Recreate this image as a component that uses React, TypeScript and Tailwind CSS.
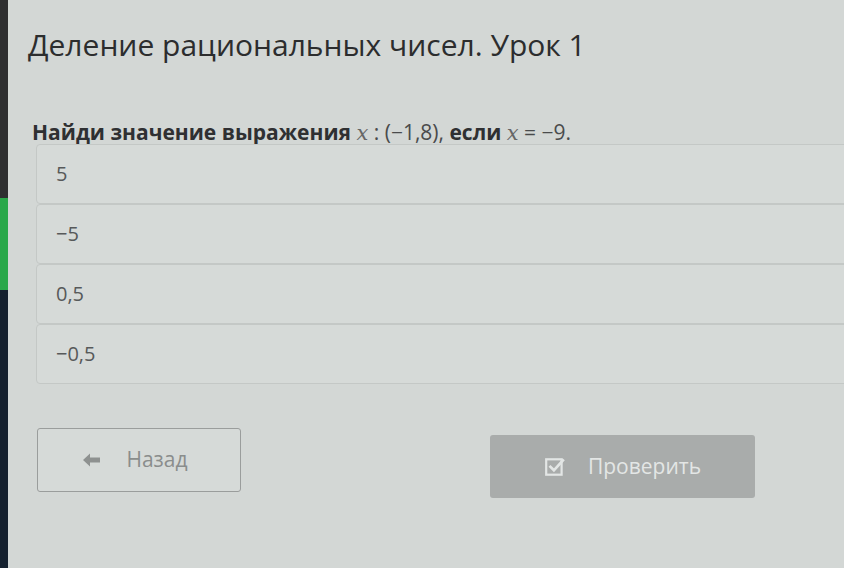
import React from "react";

const options = ["5", "\u22125", "0,5", "\u22120,5"];

export default function App() {
  return (
    <div className="flex h-[568px] w-[844px] overflow-hidden bg-[#d3d7d5]" style={{ fontFamily: '"Open Sans", "Noto Sans", sans-serif' }}>
      <div className="flex w-[8px] shrink-0 flex-col">
        <div className="h-[198px] bg-[#2e2f30]" />
        <div className="h-[92px] bg-[#2aa84a]" />
        <div className="flex-1 bg-[#14202e]" />
      </div>
      <div className="flex min-w-0 flex-1 flex-col pl-[20px]">
        <h1 className="mt-[24px] whitespace-nowrap text-[30px] leading-[42px] tracking-[0px] text-[#2c2d2e]">
          Деление рациональных чисел. Урок 1
        </h1>
        <p className="mt-[52px] whitespace-nowrap pl-[4px] text-[21px] font-bold leading-[28px] text-[#2f3032]">
          Найди значение выражения{" "}
          <span className="font-normal italic text-[#666]" style={{ fontFamily: '"DejaVu Serif", serif' }}>x</span>
          <span className="font-normal text-[#4a4b4c]"> : (−1,8), </span>
          если{" "}
          <span className="font-normal italic text-[#666]" style={{ fontFamily: '"DejaVu Serif", serif' }}>x</span>
          <span className="font-normal text-[#4a4b4c]"> = −9.</span>
        </p>
        <div className="-mr-[20px] ml-[8px] -mt-[3px] flex flex-col">
          {options.map((o) => (
            <div
              key={o}
              className="flex h-[60px] items-center rounded-[4px] border border-[#c4c8c6] bg-[#d6dad8] pl-[19px] text-[20px] text-[#57595a]"
            >
              {o}
            </div>
          ))}
        </div>
        <div className="mt-[44px] flex items-start">
          <button className="ml-[9px] flex h-[64px] w-[204px] items-center justify-center gap-[24px] rounded-[3px] border border-[#9a9d9c] bg-[#d6dad8] text-[21px] text-[#8a8d8c]">
            <svg width="20" height="16" viewBox="0 0 20 16" className="ml-[-8px]">
              <path d="M1 8 L8 1.5 L8 5.5 L18 5.5 L18 10.5 L8 10.5 L8 14.5 Z" fill="#8e9190" />
            </svg>
            Назад
          </button>
          <button className="ml-[249px] mt-[7px] flex h-[63px] w-[265px] items-center justify-center gap-[22px] rounded-[3px] bg-[#a9acab] text-[21px] text-[#e3e6e5]">
            <svg width="22" height="22" viewBox="0 0 20 20">
              <rect x="2" y="3" width="14" height="14" fill="none" stroke="#e3e6e5" strokeWidth="2" />
              <path d="M5 9 L9 13 L18 3" fill="none" stroke="#e3e6e5" strokeWidth="2.5" />
            </svg>
            Проверить
          </button>
        </div>
      </div>
    </div>
  );
}
